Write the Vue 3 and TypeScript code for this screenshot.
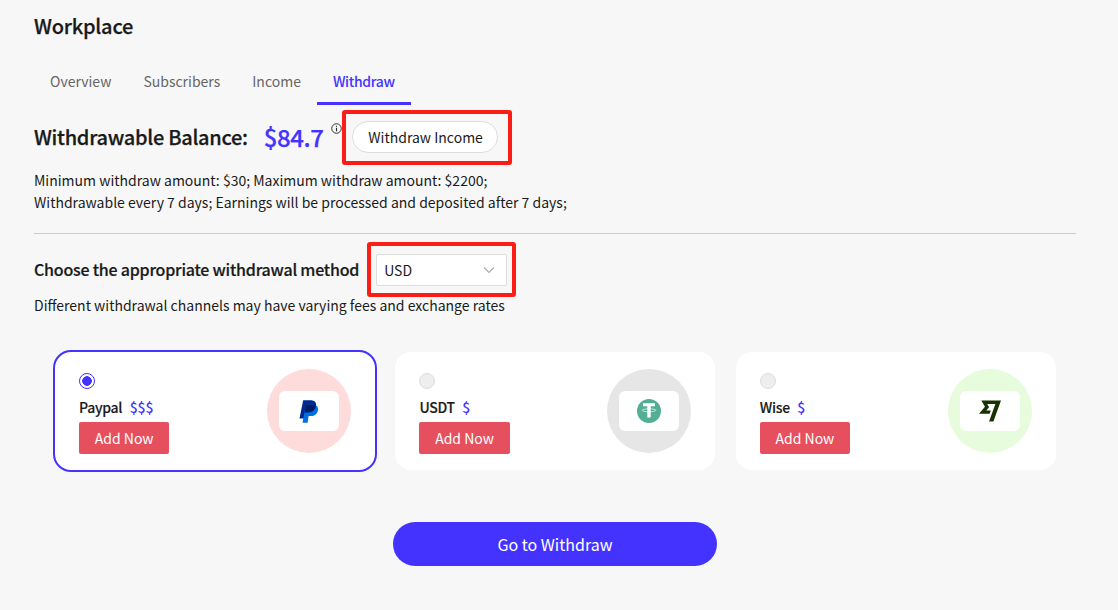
<script setup lang="ts">
interface Method { key: string; name: string; cost: string; tint: string; selected: boolean }
const tabs: string[] = ['Overview', 'Subscribers', 'Income', 'Withdraw']
const methods: Method[] = [
  { key: 'paypal', name: 'Paypal', cost: '$$$', tint: 'tint-red', selected: true },
  { key: 'usdt', name: 'USDT', cost: '$', tint: 'tint-grey', selected: false },
  { key: 'wise', name: 'Wise', cost: '$', tint: 'tint-green', selected: false },
]
</script>

<template>
  <div class="page">
    <h1 class="title">Workplace</h1>
    <nav class="tabs">
      <span v-for="t in tabs" :key="t" class="tab" :class="{ active: t === 'Withdraw' }">{{ t }}</span>
    </nav>

    <div class="balance">
      <span class="balance-label">Withdrawable Balance:</span>
      <span class="amount">$84.7</span>
      <svg class="info" viewBox="0 0 12 12" width="11" height="11" fill="none" stroke="#222">
        <circle cx="6" cy="6" r="5.2" stroke-width="1" />
        <path d="M6 5.200V9M6 3v1.200" stroke-width="1.2" />
      </svg>
      <span class="marked">
        <button class="income-btn" type="button">Withdraw Income</button>
        <i class="red-box box-one"></i>
      </span>
    </div>

    <p class="note">Minimum withdraw amount: $30; Maximum withdraw amount: $2200;<br />Withdrawable every 7 days; Earnings will be processed and deposited after 7 days;</p>

    <hr class="rule" />

    <div class="choose">
      <span class="choose-label">Choose the appropriate withdrawal method</span>
      <span class="marked">
        <span class="select">
          <span>USD</span>
          <svg viewBox="0 0 12 12" width="12" height="12" fill="none" stroke="#a8a8a8" stroke-width="1.1">
            <path d="M1 3.500 6 8.500 11 3.500" />
          </svg>
        </span>
        <i class="red-box box-two"></i>
      </span>
    </div>
    <p class="hint">Different withdrawal channels may have varying fees and exchange rates</p>

    <div class="cards">
      <div v-for="m in methods" :key="m.key" class="card" :class="{ selected: m.selected }">
        <div class="card-main">
          <span class="radio" :class="{ on: m.selected }"></span>
          <div class="name-row">
            <span class="name">{{ m.name }}</span>
            <span class="cost">{{ m.cost }}</span>
          </div>
          <button class="add-btn" type="button">Add Now</button>
        </div>
        <div class="logo-circle" :class="m.tint">
          <div class="logo-plate">
            <svg v-if="m.key === 'paypal'" class="shift-left" viewBox="0 0 24 27" width="20" height="23">
              <path fill="#002991" d="M6.200 0h8.600c5 0 7.600 2.600 6.800 6.900-.8 4.800-4.300 7.800-9 7.800H9.300L8.100 22H1.800z" />
              <path fill="#0070e0" d="M9.500 5.500h8.700c4.400 0 6.500 2.500 5.700 6.500-.8 4.400-4 7-8.300 7h-2.900L11.500 27H5.400z" />
              <path fill="#001c64" d="M9.500 5.500h11.900c.6 4.800-3.400 9.200-8.800 9.200H8z" />
            </svg>
            <svg v-else-if="m.key === 'usdt'" viewBox="0 0 24 24" width="24" height="24">
              <circle cx="12" cy="12" r="12" fill="#53ae94" />
              <ellipse cx="12" cy="11.300" rx="6.800" ry="1.500" fill="none" stroke="#fff" stroke-width=".8" stroke-opacity=".8" />
              <path fill="#fff" d="M6 4.300h12v3h-4.300V18.500h-3.400V7.300H6z" />
            </svg>
            <svg v-else viewBox="0 0 24 24" width="22" height="22">
              <path fill="#163300" d="M6.488 7.469 0 15.050h11.585l1.301-3.576H7.922l3.033-3.507.01-.092L8.993 4.480h8.873l-6.878 18.925h4.706L24 .595H2.543l3.945 6.874Z" />
            </svg>
          </div>
        </div>
      </div>
    </div>

    <div class="go-wrap">
      <button class="go-btn" type="button">Go to Withdraw</button>
    </div>
  </div>
</template>

<style>
html, body { margin: 0; background: #f7f7f7; }
</style>

<style scoped>
.page {
  box-sizing: border-box;
  width: 1118px;
  height: 610px;
  padding: 11px 42px 0 34px;
  background: #f7f7f7;
  color: #1a1a1a;
  font-family: "Noto Sans CJK SC", "Noto Sans", sans-serif;
  font-size: 14px;
  overflow: hidden;
}
.title {
  margin: 0;
  font-size: 20px;
  line-height: 30px;
  font-weight: 500;
  letter-spacing: -0.22px;
  -webkit-text-stroke: 0.25px currentColor;
}
.tabs { display: flex; margin-top: 19px; height: 45px; }
.tab {
  box-sizing: border-box;
  padding: 10px 16px 0;
  height: 45px;
  color: #666;
  line-height: 22px;
}
.tab.active {
  color: #4433ff;
  font-weight: 500;
  letter-spacing: -0.35px;
  border-bottom: 3px solid #4433ff;
}
.balance { display: flex; align-items: center; height: 32px; margin-top: 16px; }
.balance-label {
  font-size: 20px;
  font-weight: 500;
  line-height: 32px;
  letter-spacing: -0.29px;
  -webkit-text-stroke: 0.25px currentColor;
}
.amount {
  margin-left: 16px;
  font-size: 24px;
  font-weight: 500;
  color: #4433ff;
  line-height: 32px;
  letter-spacing: -0.4px;
  -webkit-text-stroke: 0.25px currentColor;
}
.info { align-self: flex-start; margin: 2px 0 0 7px; }
.marked { position: relative; display: inline-flex; }
.income-btn {
  box-sizing: border-box;
  margin-left: 10px;
  width: 146px;
  height: 32px;
  padding: 0 0 0 2px;
  border: 1px solid #ddd;
  border-radius: 16px;
  background: #fff;
  color: #1a1a1a;
  font: inherit;
}
.red-box {
  position: absolute;
  box-sizing: border-box;
  border: 4px solid #fa1e16;
  border-radius: 3px;
  pointer-events: none;
}
.box-one { left: 0; top: -11px; width: 170px; height: 55px; }
.box-two { left: 8px; top: -12px; width: 149px; height: 55px; }
.note { margin: 16px 0 0; line-height: 22px; }
.rule { margin: 20px 0 0; border: 0; border-top: 1px solid #ccc; }
.choose { display: flex; align-items: center; height: 32px; margin-top: 20px; }
.choose-label {
  margin-bottom: 2px;
  font-size: 16px;
  font-weight: 500;
  letter-spacing: -0.22px;
  -webkit-text-stroke: 0.2px currentColor;
}
.marked .select {
  box-sizing: border-box;
  display: flex;
  align-items: center;
  justify-content: space-between;
  margin-left: 17px;
  width: 131px;
  height: 32px;
  padding: 0 11px 0 7px;
  background: #fff;
  border: 1px solid #ddd;
  border-radius: 2px;
}
.hint { margin: 8px 0 0; line-height: 22px; }
.cards {
  display: grid;
  grid-template-columns: repeat(3, 320px);
  column-gap: 20.4px;
  margin: 36px 0 0 21px;
}
.card {
  position: relative;
  box-sizing: border-box;
  display: flex;
  justify-content: space-between;
  align-items: center;
  height: 118px;
  padding: 0 24px;
  background: #fff;
  border-radius: 16px;
}
.card.selected { outline: 2px solid #4433ff; }
.card-main {
  display: flex;
  flex-direction: column;
  align-items: flex-start;
  align-self: flex-start;
  padding-top: 21px;
}
.radio {
  box-sizing: border-box;
  width: 16px;
  height: 16px;
  border: 1px solid #ddd;
  border-radius: 50%;
  background: #eee;
}
.radio.on {
  border-color: #4433ff;
  background: radial-gradient(circle, #4433ff 0 4.5px, #fff 5px);
}
.name-row { display: flex; align-items: center; margin-top: 7px; height: 22px; }
.name { font-weight: 500; letter-spacing: -0.3px; -webkit-text-stroke: 0.15px currentColor; }
.cost { margin-left: 7.500px; color: #4433ff; font-weight: 500; }
.add-btn {
  margin-top: 4px;
  box-sizing: border-box;
  width: 90.3px;
  height: 32px;
  padding: 0;
  border: 0;
  border-radius: 2px;
  background: #e64f5d;
  color: #fff;
  font: inherit;
}
.logo-circle {
  display: flex;
  align-items: center;
  justify-content: center;
  width: 84px;
  height: 84px;
  border-radius: 50%;
}
.tint-red { background: #ffdcdc; }
.tint-grey { background: #e6e6e6; }
.tint-green { background: #e6fcdc; }
.logo-plate {
  display: flex;
  align-items: center;
  justify-content: center;
  width: 60px;
  height: 40px;
  background: #fff;
  border-radius: 6px;
}
.shift-left { margin-right: 3px; }
.go-wrap { display: flex; justify-content: center; margin-top: 52px; }
.go-btn {
  width: 324px;
  height: 44px;
  border: 0;
  border-radius: 22px;
  background: #4433ff;
  color: #fff;
  font: inherit;
  font-size: 16px;
}
</style>
